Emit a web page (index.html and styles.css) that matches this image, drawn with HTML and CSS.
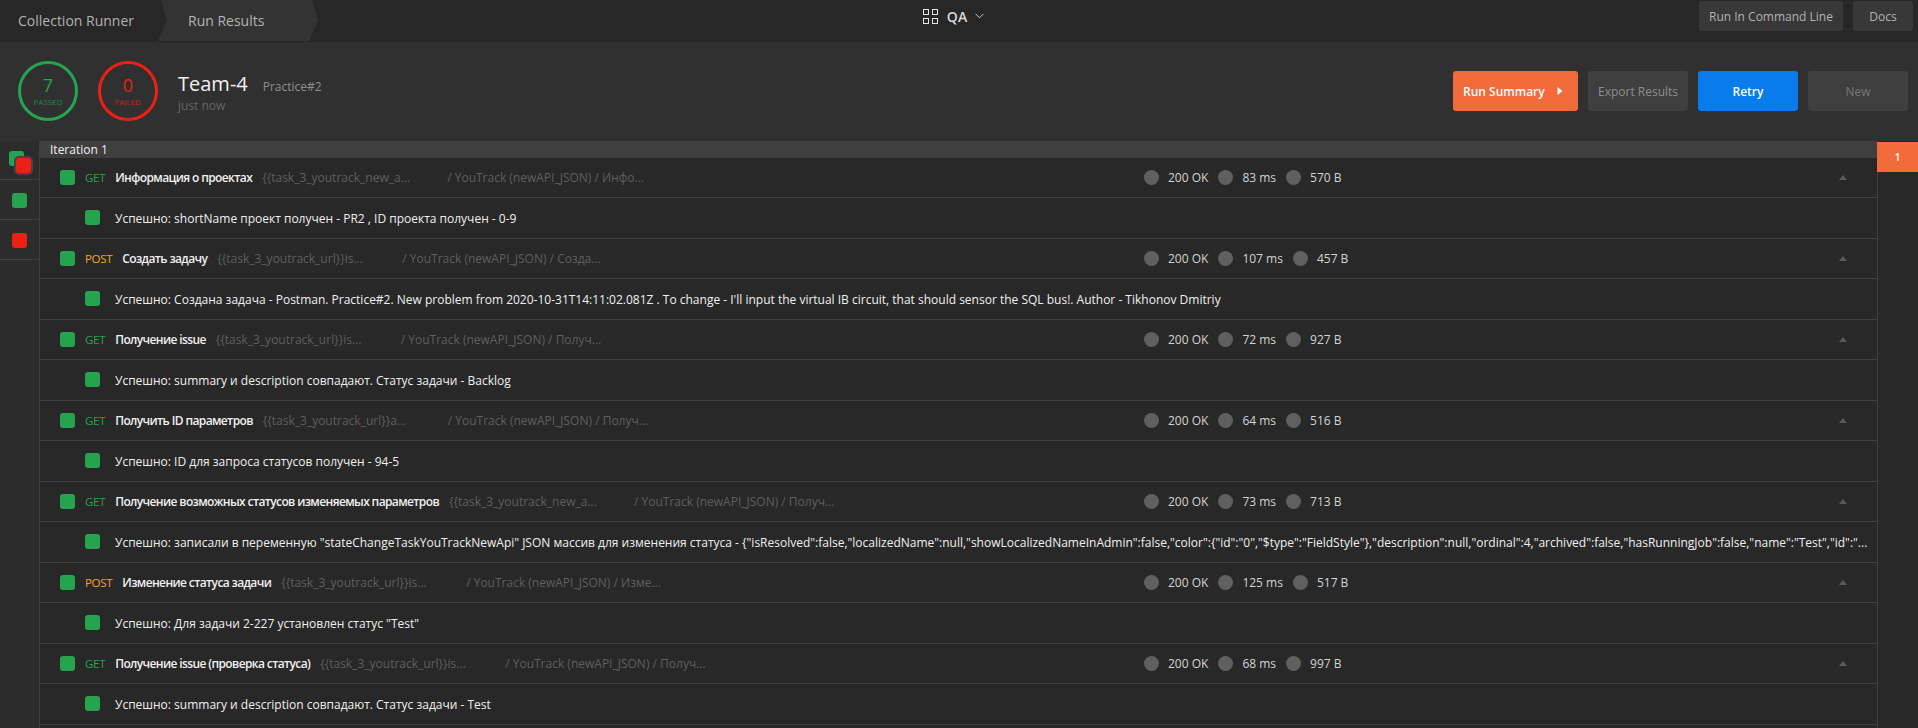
FILE: index.html
```html
<!DOCTYPE html>
<html lang="en">
<head>
    <meta charset="UTF-8">
    <title>Collection Runner</title>
    <link rel="stylesheet" href="styles.css">
</head>
<body>
    <header class="topbar">
        <nav class="tabs">
            <div class="tab">Collection Runner</div>
            <div class="tab tab-active">Run Results</div>
        </nav>
        <div class="workspace">
            <svg class="grid-icon" width="15" height="15" viewBox="0 0 15 15" fill="none" stroke="#e6e6e6">
                <rect x="0.5" y="0.5" width="5" height="5"/>
                <rect x="9.5" y="0.5" width="5" height="5"/>
                <rect x="0.5" y="9.5" width="5" height="5"/>
                <rect x="9.5" y="9.5" width="5" height="5"/>
            </svg>
            <span class="workspace-name">QA</span>
            <svg width="9" height="6" viewBox="0 0 9 6" fill="none" stroke="#d0d0d0"><path d="M0.5 0.8 L4.5 4.8 L8.5 0.8"/></svg>
        </div>
        <div class="top-actions">
            <button class="top-btn btn-cli">Run In Command Line</button>
            <button class="top-btn btn-docs">Docs</button>
        </div>
    </header>

    <section class="summary">
        <div class="ring ring-pass">
            <span class="ring-num">7</span>
            <span class="ring-label">PASSED</span>
        </div>
        <div class="ring ring-fail">
            <span class="ring-num">0</span>
            <span class="ring-label">FAILED</span>
        </div>
        <div class="run-info">
            <div class="run-title"><span class="run-name">Team-4</span><span class="run-env">Practice#2</span></div>
            <div class="run-time">just now</div>
        </div>
        <div class="actions">
            <button class="btn btn-orange">Run Summary <svg width="6" height="8" viewBox="0 0 6 8"><path d="M0.5 0 L5.5 4 L0.5 8 Z" fill="#fff"/></svg></button>
            <button class="btn btn-gray">Export Results</button>
            <button class="btn btn-blue">Retry</button>
            <button class="btn btn-gray btn-new">New</button>
        </div>
    </section>

    <main class="results">
        <aside class="filters">
            <div class="filter-cell">
                <div class="stack">
                    <span class="sq green"></span>
                    <span class="sq red stack-top"></span>
                </div>
            </div>
            <div class="filter-cell"><span class="sq green"></span></div>
            <div class="filter-cell"><span class="sq red"></span></div>
        </aside>

        <div class="list">
            <div class="iter-title">Iteration 1</div>

            <div class="row">
                <span class="sq green"></span>
                <span class="method get">GET</span>
                <span class="name">Информация о проектах</span>
                <span class="url">{{task_3_youtrack_new_a...</span>
                <span class="path">/ YouTrack (newAPI_JSON) / Инфо...</span>
                <div class="stats">
                    <i class="dot"></i><span class="stat">200 OK</span>
                    <i class="dot"></i><span class="stat">83 ms</span>
                    <i class="dot"></i><span class="stat">570 B</span>
                </div>
                <span class="caret"></span>
            </div>
            <div class="row row-test"><span class="sq green"></span><span class="test">Успешно: shortName проект получен - PR2 , ID проекта получен - 0-9</span></div>

            <div class="row">
                <span class="sq green"></span>
                <span class="method post">POST</span>
                <span class="name">Создать задачу</span>
                <span class="url">{{task_3_youtrack_url}}is...</span>
                <span class="path">/ YouTrack (newAPI_JSON) / Созда...</span>
                <div class="stats">
                    <i class="dot"></i><span class="stat">200 OK</span>
                    <i class="dot"></i><span class="stat">107 ms</span>
                    <i class="dot"></i><span class="stat">457 B</span>
                </div>
                <span class="caret"></span>
            </div>
            <div class="row row-test"><span class="sq green"></span><span class="test">Успешно: Создана задача - Postman. Practice#2. New problem from 2020-10-31T14:11:02.081Z . To change - I'll input the virtual IB circuit, that should sensor the SQL bus!. Author - Tikhonov Dmitriy</span></div>

            <div class="row">
                <span class="sq green"></span>
                <span class="method get">GET</span>
                <span class="name">Получение issue</span>
                <span class="url">{{task_3_youtrack_url}}is...</span>
                <span class="path">/ YouTrack (newAPI_JSON) / Получ...</span>
                <div class="stats">
                    <i class="dot"></i><span class="stat">200 OK</span>
                    <i class="dot"></i><span class="stat">72 ms</span>
                    <i class="dot"></i><span class="stat">927 B</span>
                </div>
                <span class="caret"></span>
            </div>
            <div class="row row-test"><span class="sq green"></span><span class="test">Успешно: summary и description совпадают. Статус задачи - Backlog</span></div>

            <div class="row">
                <span class="sq green"></span>
                <span class="method get">GET</span>
                <span class="name">Получить ID параметров</span>
                <span class="url">{{task_3_youtrack_url}}a...</span>
                <span class="path">/ YouTrack (newAPI_JSON) / Получ...</span>
                <div class="stats">
                    <i class="dot"></i><span class="stat">200 OK</span>
                    <i class="dot"></i><span class="stat">64 ms</span>
                    <i class="dot"></i><span class="stat">516 B</span>
                </div>
                <span class="caret"></span>
            </div>
            <div class="row row-test"><span class="sq green"></span><span class="test">Успешно: ID для запроса статусов получен - 94-5</span></div>

            <div class="row">
                <span class="sq green"></span>
                <span class="method get">GET</span>
                <span class="name">Получение возможных статусов изменяемых параметров</span>
                <span class="url">{{task_3_youtrack_new_a...</span>
                <span class="path">/ YouTrack (newAPI_JSON) / Получ...</span>
                <div class="stats">
                    <i class="dot"></i><span class="stat">200 OK</span>
                    <i class="dot"></i><span class="stat">73 ms</span>
                    <i class="dot"></i><span class="stat">713 B</span>
                </div>
                <span class="caret"></span>
            </div>
            <div class="row row-test"><span class="sq green"></span><span class="test">Успешно: записали в переменную "stateChangeTaskYouTrackNewApi" JSON массив для изменения статуса - {"isResolved":false,"localizedName":null,"showLocalizedNameInAdmin":false,"color":{"id":"0","$type":"FieldStyle"},"description":null,"ordinal":4,"archived":false,"hasRunningJob":false,"name":"Test","id":"...</span></div>

            <div class="row">
                <span class="sq green"></span>
                <span class="method post">POST</span>
                <span class="name">Изменение статуса задачи</span>
                <span class="url">{{task_3_youtrack_url}}is...</span>
                <span class="path">/ YouTrack (newAPI_JSON) / Изме...</span>
                <div class="stats">
                    <i class="dot"></i><span class="stat">200 OK</span>
                    <i class="dot"></i><span class="stat">125 ms</span>
                    <i class="dot"></i><span class="stat">517 B</span>
                </div>
                <span class="caret"></span>
            </div>
            <div class="row row-test"><span class="sq green"></span><span class="test">Успешно: Для задачи 2-227 установлен статус "Test"</span></div>

            <div class="row">
                <span class="sq green"></span>
                <span class="method get">GET</span>
                <span class="name">Получение issue (проверка статуса)</span>
                <span class="url">{{task_3_youtrack_url}}is...</span>
                <span class="path">/ YouTrack (newAPI_JSON) / Получ...</span>
                <div class="stats">
                    <i class="dot"></i><span class="stat">200 OK</span>
                    <i class="dot"></i><span class="stat">68 ms</span>
                    <i class="dot"></i><span class="stat">997 B</span>
                </div>
                <span class="caret"></span>
            </div>
            <div class="row row-test"><span class="sq green"></span><span class="test">Успешно: summary и description совпадают. Статус задачи - Test</span></div>
        </div>

        <aside class="iterations">
            <div class="iter-num">1</div>
        </aside>
    </main>
</body>
</html>
```

FILE: styles.css
```css
* {
    box-sizing: border-box;
}
html, body {
    height: 100%;
}
body {
    margin: 0;
    overflow: hidden;
    display: flex;
    flex-direction: column;
    background-color: #282828;
    color: #f0f0f0;
    font-family: "Open Sans", sans-serif;
    font-size: 12px;
}
button {
    font-family: inherit;
    border: none;
}

/* top bar */
.topbar {
    height: 42px;
    flex: none;
    display: grid;
    grid-template-columns: 1fr auto 1fr;
    align-items: start;
    background-color: #272727;
}
.tabs {
    display: flex;
    height: 41px;
}
.tab {
    width: 158px;
    padding-left: 18px;
    line-height: 41px;
    font-size: 14px;
    color: #b3b3b3;
}
.tab-active {
    width: 160px;
    padding-left: 30px;
    background-color: #333;
    clip-path: polygon(3px 0, 154px 0, 160px 20px, 151px 41px, 0 41px, 9px 20px);
}
.workspace {
    display: flex;
    align-items: center;
    height: 32px;
    padding-right: 11px;
}
.grid-icon {
    margin-right: 9px;
}
.workspace-name {
    font-size: 14px;
    font-weight: 600;
    color: #d8d8d8;
    margin-right: 8px;
}
.top-actions {
    display: flex;
    justify-content: flex-end;
    gap: 10px;
    padding: 1px 5px 0 0;
}
.top-btn {
    height: 30px;
    border-radius: 3px;
    background-color: #383838;
    color: #b3b3b3;
    font-size: 12px;
}
.btn-cli {
    width: 144px;
}
.btn-docs {
    width: 60px;
}

/* run summary */
.summary {
    height: 99px;
    flex: none;
    display: flex;
    align-items: flex-start;
    padding: 19px 10px 0 18px;
    background-color: #303030;
}
.ring {
    width: 60px;
    height: 60px;
    border-radius: 50%;
    border: 3px solid;
    display: flex;
    flex-direction: column;
    align-items: center;
    padding-top: 10px;
    margin-right: 20px;
}
.ring-pass {
    border-color: #26a34f;
    color: #26a34f;
}
.ring-fail {
    border-color: #ed2015;
    color: #ed2015;
}
.ring-num {
    font-size: 18px;
    line-height: 22px;
}
.ring-label {
    font-size: 8px;
    line-height: 12px;
    opacity: 0.75;
}
.run-info {
    padding: 9px 0 0 0;
}
.run-title {
    display: flex;
    align-items: baseline;
}
.run-name {
    font-size: 20px;
    line-height: 28px;
    color: #f0f0f0;
    margin-right: 15px;
}
.run-env {
    color: #8f8f8f;
    font-size: 12px;
}
.run-time {
    color: #666;
    font-size: 12px;
    line-height: 16px;
}
.actions {
    margin-left: auto;
    display: flex;
    gap: 10px;
    padding-top: 10px;
}
.btn {
    height: 40px;
    width: 100px;
    border-radius: 3px;
    font-size: 12px;
}
.btn-orange {
    width: 125px;
    background-color: #f26b3a;
    color: #fff;
    font-weight: 600;
    display: flex;
    align-items: center;
    justify-content: space-between;
    padding: 0 15px 0 10px;
}
.btn-gray {
    background-color: #3f3f3f;
    color: #8f8f8f;
}
.btn-new {
    color: #787878;
}
.btn-blue {
    background-color: #097bed;
    color: #fff;
    font-weight: 600;
}

/* results area */
.results {
    flex: 1;
    min-height: 0;
    display: flex;
}
.filters {
    width: 40px;
    flex: none;
    background-color: #2c2c2c;
    border-right: 1px solid #404040;
}
.filter-cell {
    height: 40px;
    padding-top: 1px;
    display: flex;
    align-items: center;
    justify-content: center;
    border-bottom: 1px solid #404040;
}
.filter-cell:first-child {
    height: 39px;
    padding-top: 0;
}
.stack {
    position: relative;
    width: 22px;
    height: 22px;
    margin: 4px 0 0 1px;
}
.stack-top {
    position: absolute;
    left: 7px;
    top: 7px;
    box-shadow: 0 0 0 2px #444;
}
.sq {
    display: block;
    flex: none;
    width: 15px;
    height: 15px;
    border-radius: 3px;
}
.green {
    background-color: #26a34f;
}
.red {
    background-color: #ed2015;
}
.list {
    flex: 1;
    min-width: 0;
    overflow: hidden;
}
.iter-title {
    height: 16.5px;
    line-height: 17px;
    padding-left: 10px;
    background-color: #3f3f3f;
    color: #f0f0f0;
    font-size: 12px;
}
.row {
    height: 40.5px;
    display: flex;
    align-items: center;
    padding-left: 20px;
    border-bottom: 1px solid #404040;
    white-space: nowrap;
}
.row-test {
    padding-left: 45px;
}
.row-test .test {
    margin-left: 15px;
    padding-top: 2px;
    font-weight: 500;
}
.method {
    margin-left: 10px;
    margin-right: 10px;
    font-size: 11.5px;
    letter-spacing: -0.3px;
}
.get {
    color: #26a34f;
}
.post {
    color: #f5a623;
}
.name {
    font-weight: 600;
    letter-spacing: -0.62px;
    margin-right: 10px;
}
.url {
    width: 185px;
    color: #5f5f5f;
}
.path {
    flex: 1;
    color: #5f5f5f;
}
.stats {
    flex: none;
    width: 695px;
    display: flex;
    align-items: center;
}
.dot {
    width: 15px;
    height: 15px;
    border-radius: 50%;
    background-color: #606060;
    margin-right: 9px;
}
.stat {
    color: #d4d4d4;
    margin-right: 10px;
}
.caret {
    flex: none;
    margin-right: 30px;
    width: 0;
    height: 0;
    border-left: 4px solid transparent;
    border-right: 4px solid transparent;
    border-bottom: 5px solid #5a5a5a;
}
.iterations {
    width: 41px;
    flex: none;
    border-left: 1px solid #404040;
    padding-top: 1px;
    background-color: #282828;
}
.iter-num {
    height: 30px;
    line-height: 30px;
    margin-left: -1px;
    text-align: center;
    background-color: #f26b3a;
    color: #fff;
    font-size: 10px;
    font-weight: 600;
}
```
